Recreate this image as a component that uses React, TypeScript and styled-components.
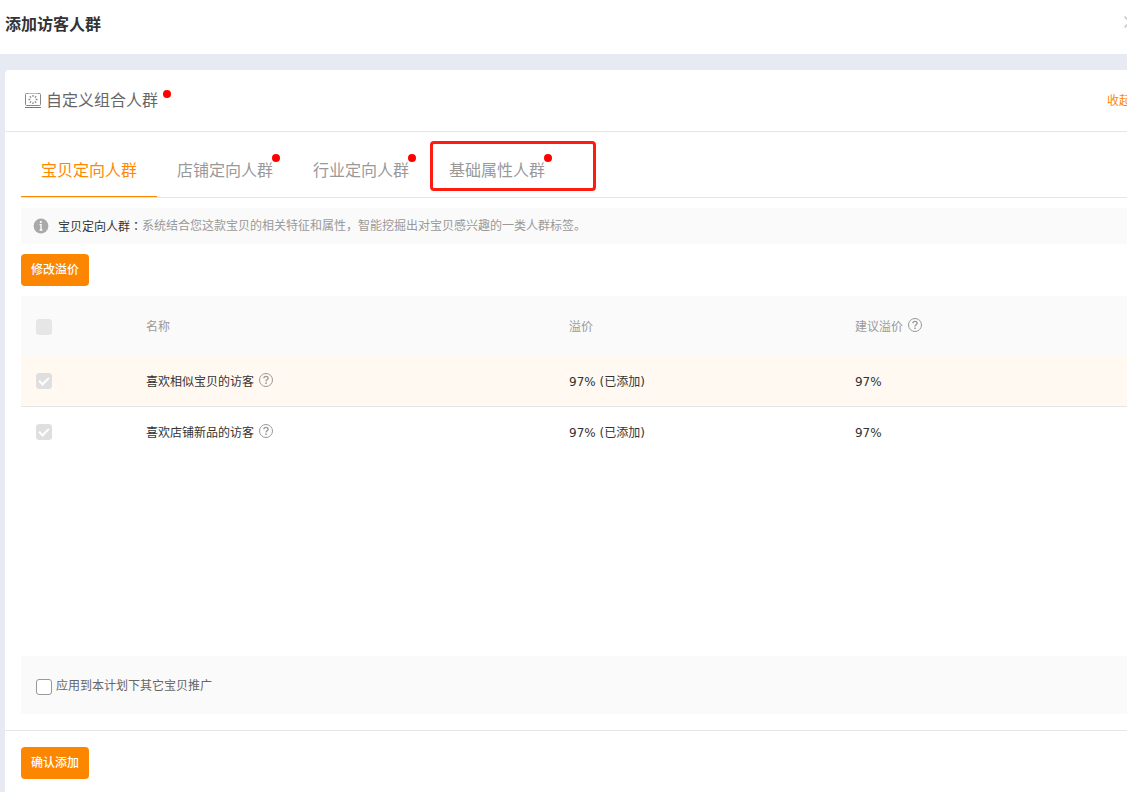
import React, { useState } from "react";
import styled, { createGlobalStyle, css } from "styled-components";

const GlobalStyle = createGlobalStyle`
  *, *::before, *::after { box-sizing: border-box; }
  html, body { margin: 0; background: #e7eaf3; }
  body, button, input {
    font-family: "DejaVu Sans", "Noto Sans CJK SC", sans-serif;
    font-size: 12px;
    color: #333;
  }
  body { line-height: 20px; overflow-x: hidden; }
`;

const Page = styled.div`
  display: flex;
  flex-direction: column;
  min-height: 100vh;
  overflow: hidden;
`;

const PageHeader = styled.header`
  display: flex;
  align-items: center;
  justify-content: space-between;
  height: 54px;
  padding: 0 0 4px 5px;
  background: #fff;
`;

const PageTitle = styled.h1`
  margin: 0;
  font-size: 16px;
  line-height: 24px;
  font-weight: 700;
`;

const CloseButton = styled.button`
  display: flex;
  margin-right: -9px;
  padding: 0 0 6px;
  border: 0;
  background: none;
  color: #ccc;
  cursor: pointer;
`;

const Card = styled.main`
  display: flex;
  flex-direction: column;
  flex: 1;
  margin: 16px 0 0 5px;
  border-top-left-radius: 4px;
  background: #fff;
`;

const CardHeader = styled.div`
  display: flex;
  align-items: center;
  justify-content: space-between;
  height: 62px;
  padding-left: 20px;
  border-bottom: 1px solid #e6e6e6;
`;

const CardTitle = styled.h2`
  display: flex;
  align-items: center;
  gap: 5px;
  margin: 0;
  color: #666;
  font-size: 16px;
  line-height: 24px;
  font-weight: 400;
`;

const CollapseLink = styled.a`
  flex: none;
  margin-right: -4px;
  color: #ff8800;
  text-decoration: none;
`;

const Dotted = styled.span<{ $gap?: number; $rise?: number }>`
  position: relative;
  &::after {
    content: "";
    position: absolute;
    top: ${(p) => p.$rise ?? -7}px;
    left: calc(100% + ${(p) => p.$gap ?? -1}px);
    width: 8px;
    height: 8px;
    border-radius: 50%;
    background: #ff0000;
  }
`;

const CardBody = styled.div`
  display: flex;
  flex-direction: column;
  flex: 1;
  padding-left: 16px;
`;

const Tabs = styled.div`
  display: flex;
  height: 66px;
  border-bottom: 1px solid #e6e6e6;
`;

const Tab = styled.button<{ $active: boolean; $marked?: boolean }>`
  position: relative;
  padding: 14px 20px 0;
  border: 0;
  border-bottom: 1px solid ${(p) => (p.$active ? "#ff8800" : "transparent")};
  background: none;
  color: ${(p) => (p.$active ? "#ff8800" : "#999")};
  font-size: 16px;
  line-height: 24px;
  cursor: pointer;
  ${(p) =>
    p.$marked &&
    css`
      &::before {
        content: "";
        position: absolute;
        top: 9px;
        left: 1px;
        width: 166px;
        height: 50px;
        border: 3px solid #fe1c11;
        border-radius: 4px;
      }
    `}
`;

const Notice = styled.p`
  display: flex;
  align-items: center;
  height: 36px;
  margin: 10px 0;
  padding-left: 12px;
  background: #fafafa;
  color: #999;
  svg { margin-right: 9px; }
`;

const NoticeLabel = styled.span`
  color: #333;
`;

const CenteredMark = styled.span`
  font-family: "Noto Sans CJK TC", sans-serif;
`;

const PrimaryButton = styled.button`
  align-self: flex-start;
  height: 32px;
  padding: 0 10px;
  border: 0;
  border-radius: 4px;
  background: #fc8600;
  color: #fff;
  font-weight: 500;
  line-height: 20px;
  cursor: pointer;
`;

const TableArea = styled.div`
  flex: 1;
  min-height: 360px;
  padding-top: 10px;
`;

const Table = styled.table`
  width: 100%;
  table-layout: fixed;
  border-spacing: 0;
  text-align: left;
`;

const Col = styled.col<{ $width?: string }>`
  width: ${(p) => p.$width ?? "auto"};
`;

const HeadCell = styled.th`
  height: 60px;
  padding: 2px 0 0 15px;
  background: #fafafa;
  color: #999;
  font-weight: 400;
`;

const Row = styled.tr<{ $highlight?: boolean }>`
  background: ${(p) => (p.$highlight ? "#fff9f2" : "#fff")};
  td {
    border-bottom: 1px solid ${(p) => (p.$highlight ? "#e6e6e6" : "transparent")};
  }
`;

const Cell = styled.td`
  height: 51px;
  padding: 2px 0 0 15px;
`;

const CheckCell = styled(Cell)`
  padding-top: 0;
`;

const WithHelp = styled.span`
  display: flex;
  align-items: center;
  gap: 5px;
  svg { margin-bottom: 4px; }
`;

const Checkbox = styled.input.attrs({ type: "checkbox" })`
  position: relative;
  display: block;
  appearance: none;
  flex: none;
  width: 16px;
  height: 16px;
  margin: 0;
  border: 1px solid #999;
  border-radius: 3px;
  background: #fff;
  &:disabled {
    border-color: #e6e6e6;
    background: #e6e6e6;
  }
  &:checked {
    border-color: #ff8800;
    background: #ff8800;
  }
  &:checked:disabled {
    border-color: #dfdfdf;
    background: #dfdfdf;
  }
  &:checked::after {
    content: "";
    position: absolute;
    top: 3px;
    left: 2px;
    width: 10px;
    height: 6px;
    border: solid #fff;
    border-width: 0 0 2px 2px;
    transform: rotate(-45deg);
  }
`;

const ApplyBar = styled.div`
  display: flex;
  align-items: center;
  height: 58px;
  margin-bottom: 16px;
  padding: 2px 0 0 15px;
  background: #fafafa;
`;

const ApplyLabel = styled.label`
  display: flex;
  align-items: center;
  gap: 4px;
  color: #666;
  input { margin-top: 2px; }
`;

const CardFooter = styled.footer`
  display: flex;
  padding: 16px 16px 13px;
  border-top: 1px solid #e6e6e6;
`;

const CloseIcon = () => (
  <svg width="12" height="12" viewBox="0 0 12 12" fill="none" stroke="currentColor" strokeWidth="1.8" aria-hidden="true">
    <path d="M.5.5l11 11M11.5.5l-11 11" />
  </svg>
);

const CrowdIcon = () => (
  <svg width="16" height="16" viewBox="0 0 16 16" fill="none" stroke="#888" aria-hidden="true">
    <path d="M3 .5H1.5a1 1 0 0 0-1 1v10a1 1 0 0 0 1 1h13a1 1 0 0 0 1-1v-10a1 1 0 0 0-1-1H13" />
    <path d="M3 .5h10" stroke="#bbb" />
    <path d="M0 14.5h16" stroke="#777" />
    <path
      d="M8 2v1.8M8 9.2V11M3.5 6.5h1.8M10.7 6.5h1.8M4.8 3.3l1.3 1.3M9.9 8.4l1.3 1.3M11.2 3.3L9.9 4.6M6.1 8.4L4.8 9.7"
      strokeWidth="1.3"
    />
  </svg>
);

const InfoIcon = () => (
  <svg width="16" height="16" viewBox="0 0 16 16" aria-hidden="true">
    <circle cx="8" cy="8" r="7.4" fill="#a9a9a9" />
    <circle cx="7.8" cy="4" r="1.1" fill="#fff" />
    <path d="M6.6 6.6H8V12M6.6 12h2.8" fill="none" stroke="#fff" strokeWidth="1.3" />
  </svg>
);

const HelpIcon = () => (
  <svg width="14" height="14" viewBox="0 0 14 14" fill="none" stroke="#999" aria-hidden="true">
    <circle cx="7" cy="7" r="6.5" />
    <path d="M4.9 5.3c0-1.2.9-1.9 2.1-1.9s2.1.7 2.1 1.8c0 1.5-2.1 1.5-2.1 3.2" strokeWidth="1.4" />
    <path d="M7 9.6V11" strokeWidth="1.5" />
  </svg>
);

const tabs = [
  { name: "宝贝定向人群", dot: false, marked: false },
  { name: "店铺定向人群", dot: true, marked: false },
  { name: "行业定向人群", dot: true, marked: false },
  { name: "基础属性人群", dot: true, marked: true },
];

const rows = [
  { name: "喜欢相似宝贝的访客", premium: "97% (已添加)", suggested: "97%" },
  { name: "喜欢店铺新品的访客", premium: "97% (已添加)", suggested: "97%" },
];

export default function App() {
  const [active, setActive] = useState(0);
  return (
    <>
      <GlobalStyle />
      <Page>
        <PageHeader>
          <PageTitle>添加访客人群</PageTitle>
          <CloseButton type="button" aria-label="关闭">
            <CloseIcon />
          </CloseButton>
        </PageHeader>
        <Card>
          <CardHeader>
            <CardTitle>
              <CrowdIcon />
              <Dotted $gap={5} $rise={1}>自定义组合人群</Dotted>
            </CardTitle>
            <CollapseLink href="#">收起</CollapseLink>
          </CardHeader>
          <CardBody>
            <Tabs role="tablist">
              {tabs.map((tab, i) => (
                <Tab
                  key={tab.name}
                  type="button"
                  role="tab"
                  aria-selected={i === active}
                  $active={i === active}
                  $marked={tab.marked}
                  onClick={() => setActive(i)}
                >
                  {tab.dot ? <Dotted>{tab.name}</Dotted> : tab.name}
                </Tab>
              ))}
            </Tabs>
            <Notice>
              <InfoIcon />
              <NoticeLabel>
                宝贝定向人群<CenteredMark>：</CenteredMark>
              </NoticeLabel>
              <span>系统结合您这款宝贝的相关特征和属性，智能挖掘出对宝贝感兴趣的一类人群标签。</span>
            </Notice>
            <PrimaryButton type="button">修改溢价</PrimaryButton>
            <TableArea>
              <Table>
                <colgroup>
                  <Col $width="110px" />
                  <Col $width="38.25%" />
                  <Col $width="25.85%" />
                  <Col />
                </colgroup>
                <thead>
                  <tr>
                    <HeadCell>
                      <Checkbox disabled aria-label="全选" />
                    </HeadCell>
                    <HeadCell>名称</HeadCell>
                    <HeadCell>溢价</HeadCell>
                    <HeadCell>
                      <WithHelp>
                        建议溢价
                        <HelpIcon />
                      </WithHelp>
                    </HeadCell>
                  </tr>
                </thead>
                <tbody>
                  {rows.map((row, i) => (
                    <Row key={row.name} $highlight={i === 0}>
                      <CheckCell>
                        <Checkbox checked disabled readOnly aria-label={row.name} />
                      </CheckCell>
                      <Cell>
                        <WithHelp>
                          {row.name}
                          <HelpIcon />
                        </WithHelp>
                      </Cell>
                      <Cell>{row.premium}</Cell>
                      <Cell>{row.suggested}</Cell>
                    </Row>
                  ))}
                </tbody>
              </Table>
            </TableArea>
            <ApplyBar>
              <ApplyLabel>
                <Checkbox />
                应用到本计划下其它宝贝推广
              </ApplyLabel>
            </ApplyBar>
          </CardBody>
          <CardFooter>
            <PrimaryButton type="button">确认添加</PrimaryButton>
          </CardFooter>
        </Card>
      </Page>
    </>
  );
}
